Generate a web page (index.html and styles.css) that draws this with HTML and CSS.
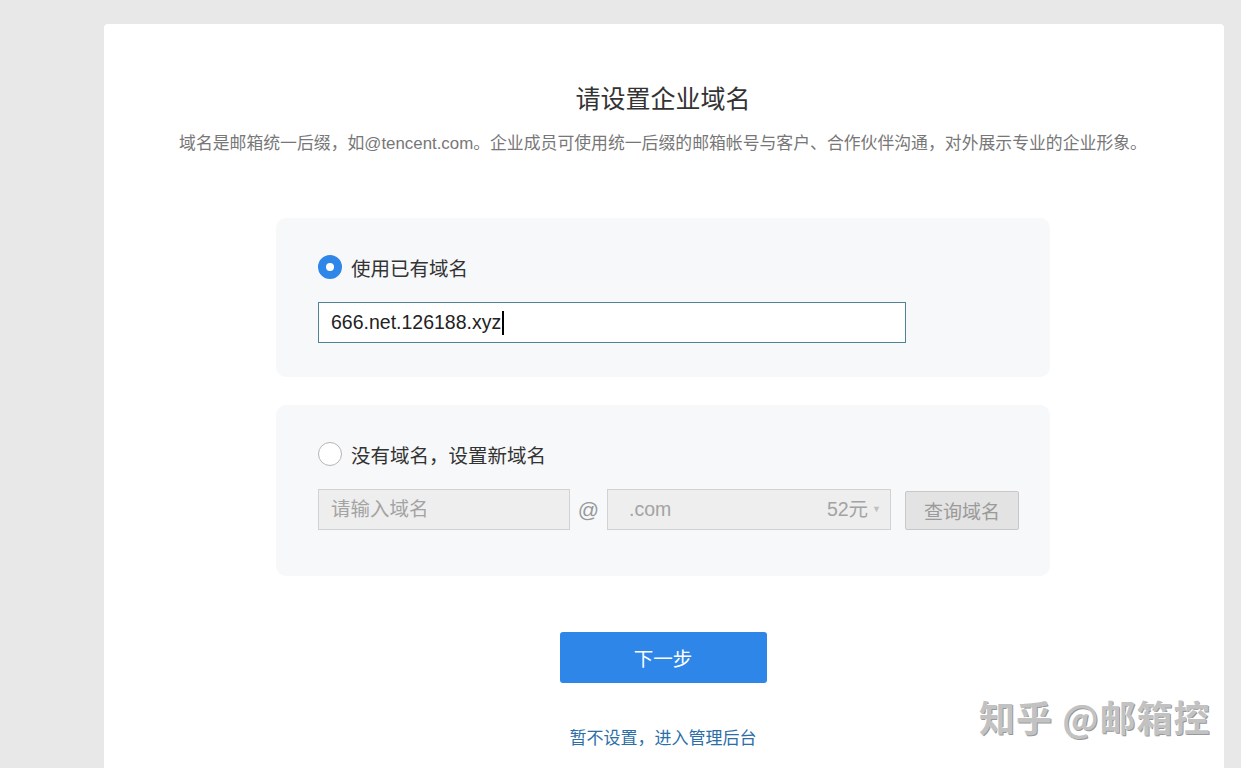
FILE: index.html
```html
<!DOCTYPE html>
<html lang="zh-CN">
<head>
  <meta charset="UTF-8">
  <meta name="viewport" content="width=device-width, initial-scale=1.0">
  <title>请设置企业域名</title>
  <link rel="stylesheet" href="styles.css">
</head>
<body>
  <div class="card">
    <h1>请设置企业域名</h1>
    <p class="desc">域名是邮箱统一后缀，如@tencent.com。企业成员可使用统一后缀的邮箱帐号与客户、合作伙伴沟通，对外展示专业的企业形象。</p>

    <div class="panel panel-own">
      <label class="radio-row">
        <span class="radio checked"></span>
        <span class="radio-text">使用已有域名</span>
      </label>
      <div class="domain-input">666.net.126188.xyz<span class="caret"></span></div>
    </div>

    <div class="panel panel-new">
      <label class="radio-row">
        <span class="radio"></span>
        <span class="radio-text">没有域名，设置新域名</span>
      </label>
      <div class="new-row">
        <div class="field name-field">请输入域名</div>
        <span class="at">@</span>
        <div class="field suffix-field">
          <span>.com</span>
          <span class="price">52元<span class="arrow">▼</span></span>
        </div>
        <button class="query-btn">查询域名</button>
      </div>
    </div>

    <div class="actions">
      <button class="next-btn">下一步</button>
      <a class="skip-link" href="#">暂不设置，进入管理后台</a>
    </div>
  </div>

  <div class="watermark">知乎 @邮箱控</div>
</body>
</html>
```

FILE: styles.css
```css
body {
  margin: 0;
  background: #e8e8e8;
  font-family: "Liberation Sans", "Noto Sans CJK SC", sans-serif;
  color: #333;
  padding: 24px 17px 0 104px;
  height: 744px;
  overflow: hidden;
}
.card {
  background: #fff;
  border-radius: 4px 4px 0 0;
  height: 780px;
  padding: 57px 2px 0 0;
  box-sizing: border-box;
  text-align: center;
}
h1 {
  margin: 0;
  font-size: 25px;
  line-height: 36px;
  font-weight: normal;
  color: #333;
}
.desc {
  margin: 15px 0 0;
  font-size: 16.85px;
  line-height: 24px;
  color: #777;
}
.panel {
  width: 774px;
  margin: 0 auto;
  background: #f7f8fa;
  border-radius: 10px;
  box-sizing: border-box;
  padding: 37px 31px 34px 42px;
  text-align: left;
}
.panel-own {
  margin-top: 62px;
}
.panel-new {
  margin-top: 28px;
  padding-bottom: 46px;
}
.radio-row {
  display: flex;
  align-items: center;
  height: 24px;
  cursor: pointer;
}
.radio {
  width: 24px;
  height: 24px;
  border-radius: 50%;
  border: 1px solid #b5b5b5;
  background: #fff;
  box-sizing: border-box;
  margin-right: 9px;
  flex-shrink: 0;
}
.radio.checked {
  border: 8px solid #2e86e8;
  background: #fff;
}
.radio-text {
  font-size: 19.5px;
  color: #333;
}
.domain-input {
  margin-top: 23px;
  width: 588px;
  height: 41px;
  box-sizing: border-box;
  border: 1px solid #4f8396;
  background: #fff;
  padding-left: 12px;
  font-size: 19.5px;
  line-height: 39px;
  color: #222;
  display: flex;
  align-items: center;
}
.caret {
  display: inline-block;
  width: 2px;
  height: 24px;
  background: #000;
  margin-left: 1px;
}
.new-row {
  margin-top: 23px;
  display: flex;
  align-items: center;
}
.new-row > * {
  flex: none;
}
.field {
  height: 41px;
  box-sizing: border-box;
  border: 1px solid #d2d2d2;
  background: #eeeeee;
  color: #a3a3a3;
  font-size: 19.5px;
  line-height: 39px;
}
.name-field {
  width: 252px;
  padding-left: 12px;
}
.at {
  width: 37px;
  text-align: center;
  font-size: 21px;
  color: #999;
}
.suffix-field {
  width: 284px;
  padding: 0 9px 0 21px;
  display: flex;
  justify-content: space-between;
}
.price {
  display: flex;
  align-items: center;
}
.arrow {
  font-size: 9px;
  color: #c0c0c0;
  margin-left: 4px;
}
.query-btn {
  margin-left: 14px;
  margin-top: 2px;
  width: 114px;
  height: 39px;
  border: 1px solid #c8c8c8;
  border-radius: 2px;
  background: #e3e3e3;
  color: #9a9a9a;
  font-family: inherit;
  font-size: 19px;
  padding: 0;
}
.actions {
  display: flex;
  flex-direction: column;
  align-items: center;
  margin-top: 56px;
}
.next-btn {
  width: 207px;
  height: 51px;
  border: none;
  border-radius: 3px;
  background: #2e86e8;
  color: #fff;
  font-family: inherit;
  font-size: 19.5px;
  cursor: pointer;
}
.skip-link {
  margin-top: 44px;
  font-size: 17px;
  line-height: 24px;
  color: #2b6ea8;
  text-decoration: none;
}
.watermark {
  position: absolute;
  left: 979px;
  top: 694px;
  font-size: 36px;
  line-height: 44px;
  font-family: "Noto Sans CJK SC", sans-serif;
  font-weight: bold;
  color: #c2c2c2;
  text-shadow: -1px -1px 0 #fff, 1px 1px 0 #999;
  letter-spacing: 1px;
}
```
